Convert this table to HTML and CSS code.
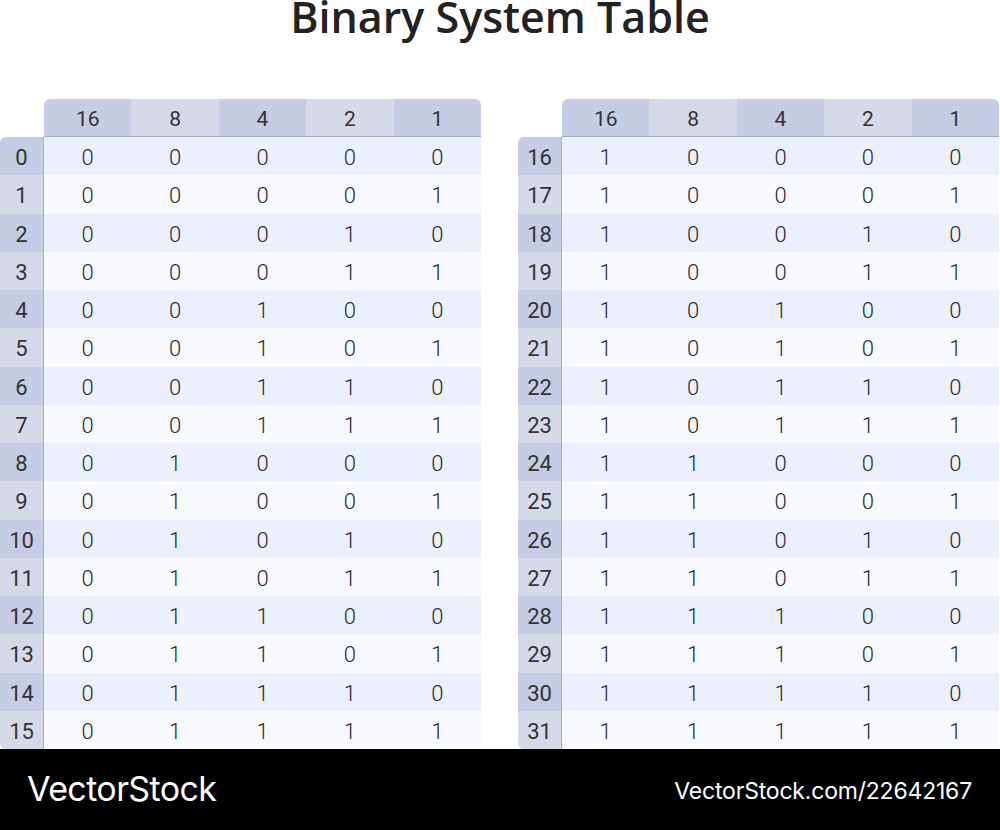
FILE: index.html
```html
<!DOCTYPE html>
<html lang="en">
<head>
<meta charset="utf-8">
<title>Binary System Table</title>
<link rel="stylesheet" href="styles.css">
</head>
<body>
<div class="page">
  <h1 class="title">Binary System Table</h1>
  <div class="tables" id="tables"></div>
  <footer class="footer">
    <span class="logo">VectorStock</span>
    <span class="url">VectorStock.com/22642167</span>
  </footer>
</div>
<script src="script.js"></script>
</body>
</html>
```

FILE: script.js
```js
(function () {
  var wrap = document.getElementById('tables');
  var weights = [16, 8, 4, 2, 1];
  for (var t = 0; t < 2; t++) {
    var table = document.createElement('div');
    table.className = 'table';
    var corner = document.createElement('div');
    corner.className = 'corner';
    table.appendChild(corner);
    weights.forEach(function (w, i) {
      var h = document.createElement('div');
      h.className = 'head ' + (i % 2 === 0 ? 'dark' : 'light');
      h.textContent = w;
      table.appendChild(h);
    });
    for (var r = 0; r < 16; r++) {
      var n = t * 16 + r;
      var label = document.createElement('div');
      label.className = 'label ' + (r % 2 === 0 ? 'dark' : 'light');
      label.textContent = n;
      table.appendChild(label);
      weights.forEach(function (w) {
        var c = document.createElement('div');
        c.className = 'cell ' + (r % 2 === 0 ? 'even' : 'odd');
        c.textContent = (n & w) ? '1' : '0';
        table.appendChild(c);
      });
    }
    wrap.appendChild(table);
  }
})();
```

FILE: styles.css
```css
html, body {
  margin: 0;
  padding: 0;
  background: #ffffff;
}
.page {
  width: 1000px;
  height: 830px;
  overflow: hidden;
  display: flex;
  flex-direction: column;
}
.title {
  margin: 0;
  height: 99px;
  box-sizing: border-box;
  padding-top: 0;
  font-family: "Open Sans", sans-serif;
  font-weight: 600;
  font-size: 43px;
  line-height: 34px;
  text-align: center;
  color: #222222;
}
.tables {
  display: flex;
  gap: 37px;
  height: 650px;
}
.table {
  width: 481px;
  display: grid;
  grid-template-columns: 44px repeat(5, 1fr);
  grid-template-rows: 38px repeat(16, 38.25px);
  font-family: "Roboto", sans-serif;
  color: #2a2a2a;
}
.head, .label, .cell {
  display: flex;
  align-items: center;
  justify-content: center;
  padding-top: 3px;
  box-sizing: border-box;
}
.head {
  font-size: 21px;
  font-weight: 400;
  color: #333333;
  border-bottom: 1px solid #a4a9c7;
}
.head:nth-child(2) { border-top-left-radius: 6px; }
.head:nth-child(6) { border-top-right-radius: 6px; }
.head.dark { background: #c7cce5; }
.head.light { background: #d6d9e8; }
.label {
  font-size: 22px;
  font-weight: 400;
  color: #333333;
  border-right: 1px solid #a4a9c7;
}
.label.dark { background: #c7cce5; }
.label.light { background: #d6d9e8; }
.table > .label:nth-child(7) { border-top-left-radius: 6px; }
.table > .label:nth-last-child(6) { border-bottom-left-radius: 6px; }
.cell {
  font-size: 22px;
  font-weight: 300;
}
.cell.even { background: #ecf0fc; }
.cell.odd { background: #f8f9fe; }
.footer {
  flex: 1;
  background: #000000;
  display: flex;
  align-items: center;
  justify-content: space-between;
  padding: 0 28px 0 27px;
  color: #ffffff;
  font-family: "Inter", sans-serif;
}
.logo {
  font-size: 34px;
  font-weight: 400;
  letter-spacing: -0.6px;
  padding-bottom: 2px;
}
.url {
  font-size: 23px;
  font-weight: 400;
  letter-spacing: -0.2px;
  padding-top: 2px;
}
```
